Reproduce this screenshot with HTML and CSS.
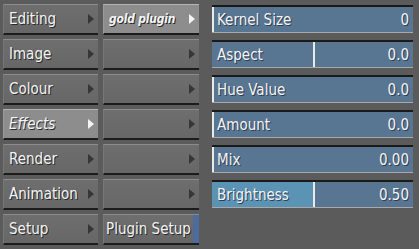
FILE: index.html
```html
<!DOCTYPE html>
<html lang="en">
<head>
  <meta charset="UTF-8" />
  <title>Plugin Setup</title>
  <link rel="stylesheet" href="styles.css">
</head>
<body>
  <div class="panel">
    <div class="menu">
      <div class="btn">Editing<span class="arrow"></span></div>
      <div class="btn">Image<span class="arrow"></span></div>
      <div class="btn">Colour<span class="arrow"></span></div>
      <div class="btn active"><i>Effects</i><span class="arrow"></span></div>
      <div class="btn">Render<span class="arrow"></span></div>
      <div class="btn">Animation<span class="arrow"></span></div>
      <div class="btn">Setup<span class="arrow"></span></div>
    </div>

    <div class="menu sub">
      <div class="btn active"><i class="bold">gold plugin</i><span class="arrow"></span></div>
      <div class="btn"><span class="arrow"></span></div>
      <div class="btn"><span class="arrow"></span></div>
      <div class="btn"><span class="arrow"></span></div>
      <div class="btn"><span class="arrow"></span></div>
      <div class="btn"><span class="arrow"></span></div>
      <div class="btn setup">Plugin Setup<span class="stripe"></span></div>
    </div>

    <div class="sliders">
      <div class="slider"><span class="mark" style="left: 0%"></span><span>Kernel Size</span><span>0</span></div>
      <div class="slider"><span class="mark" style="left: 50%"></span><span>Aspect</span><span>0.0</span></div>
      <div class="slider"><span class="mark" style="left: 0%"></span><span>Hue Value</span><span>0.0</span></div>
      <div class="slider"><span class="mark" style="left: 0%"></span><span>Amount</span><span>0.0</span></div>
      <div class="slider"><span class="mark" style="left: 0%"></span><span>Mix</span><span>0.00</span></div>
      <div class="slider"><span class="fill" style="width: 50%"></span><span class="mark" style="left: 50%"></span><span>Brightness</span><span>0.50</span></div>
    </div>
  </div>
</body>
</html>
```

FILE: styles.css
```css
body {
  margin: 0;
  background: #5b5b5b;
  font-family: "DejaVu Sans", sans-serif;
  font-stretch: condensed;
  color: #f4f4f4;
}
.panel {
  display: flex;
  padding: 4px 0 0 3px;
}
.menu {
  display: flex;
  flex-direction: column;
  gap: 4px;
  width: 95px;
}
.menu.sub {
  width: 96px;
  margin-left: 5px;
}
.btn {
  position: relative;
  height: 28px;
  display: flex;
  align-items: center;
  padding-left: 5px;
  background: linear-gradient(#6e6e6e, #676767);
  border-top: 1px solid #8c8c8c;
  border-left: 1px solid #777;
  border-bottom: 2px solid #1c1c1c;
  font-size: 15px;
  text-shadow: 1px 1px 0 #2a2a2a;
}
.btn.active {
  background: #8d8d8d;
  border-top-color: #b4b4b4;
  border-left-color: #9a9a9a;
}
.btn i {
  font-style: italic;
}
.btn i.bold {
  font-weight: bold;
  font-size: 12px;
  letter-spacing: -0.2px;
}
.arrow {
  position: absolute;
  right: 4px;
  top: 9px;
  width: 0;
  height: 0;
  border-top: 5px solid transparent;
  border-bottom: 5px solid transparent;
  border-left: 6px solid #363636;
}
.btn.active .arrow {
  border-left-color: #f4f4f4;
}
.btn.setup {
  padding-left: 2px;
}
.stripe {
  position: absolute;
  right: 0;
  top: 0;
  bottom: 0;
  width: 6px;
  background: #4b6c9c;
}
.sliders {
  display: flex;
  flex-direction: column;
  gap: 7px;
  width: 201px;
  margin-left: 13px;
  padding-top: 1px;
}
.slider {
  position: relative;
  height: 25px;
  display: flex;
  align-items: center;
  justify-content: space-between;
  padding: 0 4px 0 5px;
  background: #587592;
  border-top: 2px solid #1a1a1a;
  border-bottom: 1px solid #a9a9a9;
  font-size: 15px;
  text-shadow: 1px 1px 0 #2e3e50;
}
.slider span {
  position: relative;
}
.slider .fill {
  position: absolute;
  left: 0;
  top: 0;
  bottom: 0;
  background: #5a93b3;
}
.slider .mark {
  position: absolute;
  top: 0;
  bottom: 0;
  width: 2px;
  background: #eaeaea;
}
```
